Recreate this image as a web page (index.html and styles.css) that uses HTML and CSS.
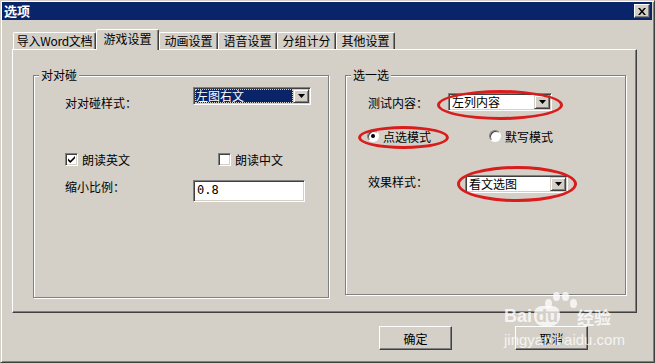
FILE: index.html
```html
<!DOCTYPE html>
<html>
<head>
    <meta charset="utf-8">
    <link rel="stylesheet" href="styles.css">
</head>
<body>
    <div class="window">
        <div class="titlebar">
            <span class="title">选项</span>
            <span class="close-btn">
                <svg width="8" height="7" viewBox="0 0 8 7"><path d="M0 0h2l2 2.5L6 0h2L5 3.5 8 7H6L4 4.5 2 7H0l3-3.5z" fill="#000"/></svg>
            </span>
        </div>

        <div class="tabs">
            <div class="tab tab-first">导入Word文档</div>
            <div class="tab active">游戏设置</div>
            <div class="tab">动画设置</div>
            <div class="tab">语音设置</div>
            <div class="tab">分组计分</div>
            <div class="tab">其他设置</div>
        </div>

        <div class="panel">
            <div class="group group-left">
                <span class="legend">对对碰</span>
                <div class="row row-style">
                    <span class="label label-style">对对碰样式：</span>
                    <div class="select select-style">
                        <span class="value selected"><span class="focus">左图右文</span></span>
                        <span class="arrow"><svg width="7" height="4" viewBox="0 0 7 4"><path d="M0 0h7L3.5 4z" fill="#000"/></svg></span>
                    </div>
                </div>
                <div class="row row-checks">
                    <label class="check-label check-first">
                        <span class="checkbox"><svg width="9" height="9" viewBox="0 0 9 9"><path d="M1 3.5l2.3 2.3L8 1v2.2L3.3 8 1 5.7z" fill="#000"/></svg></span>
                        <span>朗读英文</span>
                    </label>
                    <label class="check-label">
                        <span class="checkbox"></span>
                        <span>朗读中文</span>
                    </label>
                </div>
                <div class="row row-scale">
                    <span class="label label-scale">缩小比例：</span>
                    <div class="textbox">0.8</div>
                </div>
            </div>

            <div class="group group-right">
                <span class="legend">选一选</span>
                <div class="row row-content">
                    <span class="label label-content">测试内容：</span>
                    <div class="select select-content">
                        <span class="value">左列内容</span>
                        <span class="arrow"><svg width="7" height="4" viewBox="0 0 7 4"><path d="M0 0h7L3.5 4z" fill="#000"/></svg></span>
                    </div>
                </div>
                <div class="row row-radios">
                    <label class="radio-label radio-first">
                        <span class="radio checked"></span>
                        <span>点选模式</span>
                    </label>
                    <label class="radio-label">
                        <span class="radio"></span>
                        <span>默写模式</span>
                    </label>
                </div>
                <div class="row row-effect">
                    <span class="label label-effect">效果样式：</span>
                    <div class="select select-effect">
                        <span class="value">看文选图</span>
                        <span class="arrow"><svg width="7" height="4" viewBox="0 0 7 4"><path d="M0 0h7L3.5 4z" fill="#000"/></svg></span>
                    </div>
                </div>

                <span class="mark mark-content"></span>
                <span class="mark mark-mode"></span>
                <span class="mark mark-effect"></span>
            </div>
        </div>

        <div class="button-row">
            <button class="btn">确定</button>
            <button class="btn">取消</button>
        </div>

        <div class="watermark">
            <span class="paw paw-1"></span>
            <span class="paw paw-2"></span>
            <span class="paw paw-3"></span>
            <span class="paw paw-4"></span>
            <span class="wm-brand">Bai<span class="wm-du">du</span></span>
            <span class="wm-cn">经验</span>
            <span class="wm-url">jingyan.baidu.com</span>
        </div>
    </div>
</body>
</html>
```

FILE: styles.css
```css
* {
    box-sizing: border-box;
}
body {
    margin: 0;
    background: #D4D0C8;
    font-family: "Noto Sans CJK SC", sans-serif;
    font-size: 12px;
    color: #000;
}
.window {
    position: relative;
    width: 655px;
    height: 363px;
    background: #D4D0C8;
    border: 1px solid;
    border-color: #D4D0C8 #404040 #404040 #D4D0C8;
    box-shadow: inset 1px 1px 0 #fff, inset -1px -1px 0 #808080;
    padding: 1px 2px 2px 1px;
}
.titlebar {
    display: flex;
    align-items: center;
    justify-content: space-between;
    height: 18px;
    background: #0A246A;
    padding: 0 2px 0 2px;
}
.title {
    color: #fff;
    font-weight: bold;
    font-size: 13px;
    line-height: 18px;
}
.close-btn {
    display: flex;
    align-items: center;
    justify-content: center;
    width: 16px;
    height: 14px;
    background: #D4D0C8;
    border: 1px solid;
    border-color: #fff #404040 #404040 #fff;
    box-shadow: inset -1px -1px 0 #808080;
}

/* tabs */
.tabs {
    display: flex;
    align-items: flex-end;
    height: 20px;
    margin-top: 9px;
    padding-left: 11px;
    position: relative;
    z-index: 1;
}
.tab {
    width: 59px;
    height: 17px;
    padding: 0;
    text-align: center;
    line-height: 15px;
    border: 1px solid;
    border-bottom: none;
    border-color: #fff #404040 #fff #fff;
    box-shadow: inset -1px 0 0 #808080;
    border-radius: 2px 2px 0 0;
    background: #D4D0C8;
    white-space: nowrap;
}
.tab-first {
    width: 83px;
    letter-spacing: -0.3px;
}
.tab.active {
    width: 63px;
    height: 21px;
    margin-bottom: -1px;
    line-height: 18px;
}

/* tab body */
.panel {
    display: flex;
    gap: 16px;
    width: 625px;
    height: 264px;
    margin-left: 10px;
    padding: 25px 0 0 20px;
    border: 1px solid;
    border-color: #fff #404040 #404040 #fff;
    box-shadow: inset -1px -1px 0 #808080;
}
.group {
    position: relative;
    border: 1px solid #808080;
    box-shadow: 1px 1px 0 #fff, inset 1px 1px 0 #fff;
}
.group-left {
    width: 296px;
    height: 223px;
}
.group-right {
    width: 281px;
    height: 220px;
}
.legend {
    position: absolute;
    top: -9px;
    left: 5px;
    padding: 0 2px;
    background: #D4D0C8;
    line-height: 16px;
}
.row {
    display: flex;
    align-items: center;
}
.label {
    white-space: nowrap;
}

/* left group */
.row-style {
    margin-top: 11px;
    padding-left: 31px;
    align-items: flex-start;
}
.label-style {
    width: 128px;
    padding-top: 9px;
    line-height: 14px;
}
.row-checks {
    margin-top: 43px;
    padding-left: 31px;
    height: 13px;
}
.row-scale {
    margin-top: 14px;
    padding-left: 31px;
    align-items: flex-start;
}
.label-scale {
    width: 128px;
    line-height: 14px;
}

/* right group */
.row-content {
    margin-top: 17px;
    padding-left: 22px;
}
.label-content {
    width: 80px;
}
.row-radios {
    margin-top: 19px;
    padding-left: 21px;
    height: 12px;
}
.row-effect {
    margin-top: 33px;
    padding-left: 22px;
    align-items: flex-start;
}
.label-effect {
    width: 97px;
    line-height: 14px;
}

/* controls */
.select {
    display: flex;
    height: 18px;
    background: #fff;
    border: 1px solid;
    border-color: #808080 #fff #fff #808080;
    box-shadow: inset 1px 1px 0 #404040, inset -1px -1px 0 #D4D0C8;
    padding: 1px;
}
.select-style {
    width: 118px;
}
.select-content {
    width: 104px;
}
.select-effect {
    width: 103px;
}
.value {
    flex: 1;
    padding-left: 2px;
    line-height: 14px;
    white-space: nowrap;
}
.value.selected {
    padding: 0;
    background: #0A246A;
    color: #fff;
}
.value .focus {
    display: block;
    height: 14px;
    outline: 1px dotted #D4D0C8;
    outline-offset: -1px;
    padding-left: 1px;
}
.arrow {
    display: flex;
    align-items: center;
    justify-content: center;
    width: 16px;
    height: 14px;
    background: #D4D0C8;
    border: 1px solid;
    border-color: #D4D0C8 #404040 #404040 #D4D0C8;
    box-shadow: inset 1px 1px 0 #fff, inset -1px -1px 0 #808080;
}
.textbox {
    width: 112px;
    height: 22px;
    background: #fff;
    border: 1px solid;
    border-color: #808080 #fff #fff #808080;
    box-shadow: inset 1px 1px 0 #404040, inset -1px -1px 0 #D4D0C8;
    padding: 2px 3px;
    font-family: "DejaVu Sans Mono", monospace;
    font-size: 12px;
    line-height: 14px;
}
.check-label, .radio-label {
    display: flex;
    align-items: center;
    gap: 4px;
    white-space: nowrap;
}
.check-first {
    width: 153px;
}
.checkbox {
    display: flex;
    align-items: center;
    justify-content: center;
    width: 13px;
    height: 13px;
    background: #fff;
    border: 1px solid;
    border-color: #808080 #fff #fff #808080;
    box-shadow: inset 1px 1px 0 #404040, inset -1px -1px 0 #D4D0C8;
}
.radio-first {
    width: 122px;
}
.radio {
    position: relative;
    width: 12px;
    height: 12px;
    border-radius: 50%;
    background: #fff;
    border: 1px solid;
    border-color: #808080 #fff #fff #808080;
    box-shadow: inset 1px 1px 0 #404040;
}
.radio.checked::after {
    content: "";
    position: absolute;
    left: 3px;
    top: 3px;
    width: 4px;
    height: 4px;
    border-radius: 50%;
    background: #000;
}

/* red marks drawn over the screenshot */
.mark {
    position: absolute;
    border: 3px solid #D91C1C;
    border-radius: 50%;
}
.mark-content {
    left: 91px;
    top: 14px;
    width: 126px;
    height: 30px;
}
.mark-mode {
    left: 12px;
    top: 50px;
    width: 91px;
    height: 23px;
}
.mark-effect {
    left: 111px;
    top: 90px;
    width: 120px;
    height: 36px;
}

/* buttons */
.button-row {
    display: flex;
    gap: 63px;
    margin-top: 13px;
    padding-left: 377px;
}
.btn {
    width: 73px;
    height: 24px;
    padding: 0;
    background: #D4D0C8;
    border: 1px solid;
    border-color: #fff #404040 #404040 #fff;
    box-shadow: inset -1px -1px 0 #808080;
    font-family: "Noto Sans CJK SC", sans-serif;
    font-size: 12px;
    color: #000;
}

/* baidu watermark */
.watermark {
    position: absolute;
    left: 500px;
    top: 288px;
    width: 125px;
    height: 62px;
    color: rgba(255, 255, 255, 0.78);
    pointer-events: none;
}
.paw {
    position: absolute;
    background: rgba(255, 255, 255, 0.75);
    border-radius: 50%;
}
.paw-1 { left: 44px; top: 10px; width: 7px; height: 9px; }
.paw-2 { left: 52px; top: 3px; width: 7px; height: 9px; }
.paw-3 { left: 61px; top: 3px; width: 7px; height: 9px; }
.paw-4 { left: 69px; top: 10px; width: 7px; height: 9px; }
.wm-brand {
    position: absolute;
    left: 3px;
    top: 17px;
    font-family: "Liberation Sans", sans-serif;
    font-weight: bold;
    font-size: 18px;
    line-height: 20px;
}
.wm-du {
    display: inline-block;
    margin-left: 2px;
    padding: 0 2px;
    border-radius: 8px 8px 9px 9px;
    background: rgba(255, 255, 255, 0.75);
    color: #D4D0C8;
}
.wm-cn {
    position: absolute;
    left: 76px;
    top: 18px;
    font-size: 17px;
    line-height: 20px;
    font-weight: bold;
}
.wm-url {
    position: absolute;
    left: 3px;
    top: 43px;
    font-family: "Liberation Sans", sans-serif;
    font-size: 15px;
    line-height: 16px;
}
```
